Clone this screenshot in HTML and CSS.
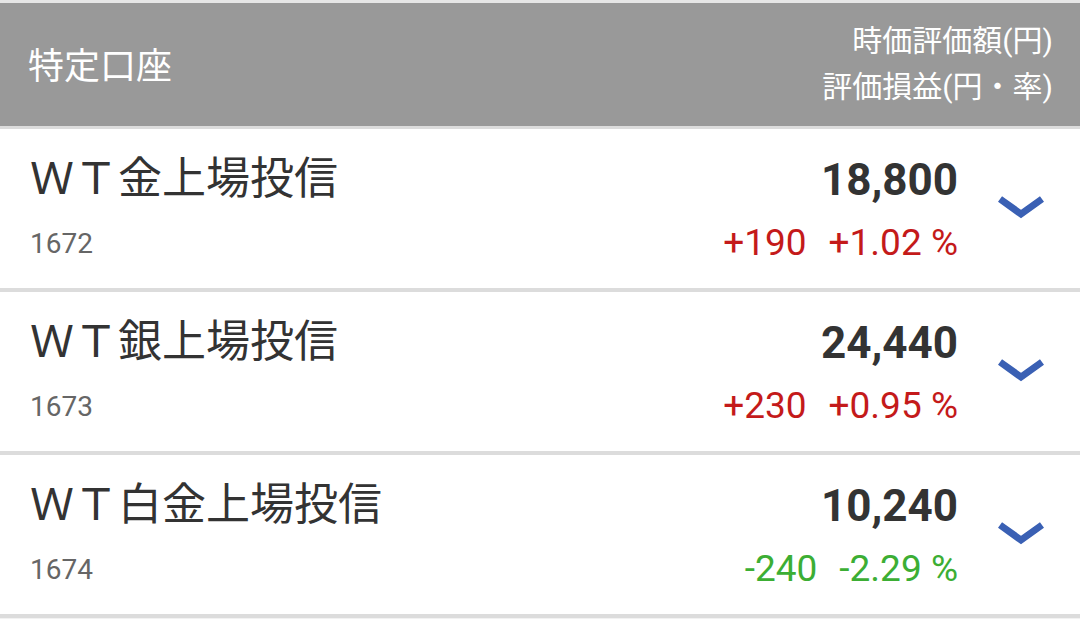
FILE: index.html
```html
<!DOCTYPE html>
<html lang="ja">
<head>
  <meta charset="UTF-8">
  <title>特定口座</title>
  <meta name="viewport" content="width=device-width, initial-scale=1.0" />
  <link rel="stylesheet" href="styles.css">
</head>
<body>

<div class="account">
  <div class="account-head">
    <div class="head-title">特定口座</div>
    <div class="head-cols">
      <div>時価評価額(円)</div>
      <div>評価損益(円・率)</div>
    </div>
  </div>

  <div class="fund">
    <div class="fund-left">
      <div class="fund-name">ＷＴ金上場投信</div>
      <div class="fund-code">1672</div>
    </div>
    <div class="fund-right">
      <div class="fund-value">18,800</div>
      <div class="fund-change up"><span>+190</span><span>+1.02 %</span></div>
    </div>
    <div class="fund-toggle">
      <svg width="46" height="24" viewBox="0 0 46 24"><path d="M2 4 L23 19 L44 4" fill="none" stroke="#3a60b4" stroke-width="7"/></svg>
    </div>
  </div>

  <div class="fund">
    <div class="fund-left">
      <div class="fund-name">ＷＴ銀上場投信</div>
      <div class="fund-code">1673</div>
    </div>
    <div class="fund-right">
      <div class="fund-value">24,440</div>
      <div class="fund-change up"><span>+230</span><span>+0.95 %</span></div>
    </div>
    <div class="fund-toggle">
      <svg width="46" height="24" viewBox="0 0 46 24"><path d="M2 4 L23 19 L44 4" fill="none" stroke="#3a60b4" stroke-width="7"/></svg>
    </div>
  </div>

  <div class="fund">
    <div class="fund-left">
      <div class="fund-name">ＷＴ白金上場投信</div>
      <div class="fund-code">1674</div>
    </div>
    <div class="fund-right">
      <div class="fund-value">10,240</div>
      <div class="fund-change down"><span>-240</span><span>-2.29 %</span></div>
    </div>
    <div class="fund-toggle">
      <svg width="46" height="24" viewBox="0 0 46 24"><path d="M2 4 L23 19 L44 4" fill="none" stroke="#3a60b4" stroke-width="7"/></svg>
    </div>
  </div>
</div>

</body>
</html>
```

FILE: styles.css
```css
* {
  box-sizing: border-box;
}

body {
  margin: 0;
  background: #f2f2f2;
  font-family: Roboto, "Noto Sans CJK JP", sans-serif;
  color: #333;
}

.account {
  border-top: 3px solid #e6e6e6;
}

.account-head {
  height: 126px;
  background: #999999;
  border-bottom: 3px solid #dcdcdc;
  color: #fff;
  display: flex;
  justify-content: space-between;
  align-items: center;
  padding: 0 27px 0 28px;
}

.head-title {
  font-family: "Noto Sans CJK JP", sans-serif;
  font-size: 36px;
  padding-bottom: 4px;
}

.head-cols {
  font-family: Roboto, "Noto Sans CJK JP", sans-serif;
  font-size: 30px;
  line-height: 46px;
  text-align: right;
  padding-bottom: 2px;
}

.fund {
  height: 163px;
  background: #fff;
  border-bottom: 4px solid #dcdcdc;
  display: flex;
  align-items: center;
  padding: 0 36px 0 30px;
}

.fund-left {
  flex: 1;
  padding-bottom: 6px;
}

.fund-name {
  font-family: "Noto Sans CJK JP", sans-serif;
  font-size: 44px;
  line-height: 56px;
  color: #333;
}

.fund-code {
  font-size: 28px;
  line-height: 40px;
  margin-top: 21px;
  color: #666;
}

.fund-right {
  text-align: right;
  padding-bottom: 3px;
}

.fund-value {
  font-size: 44px;
  font-weight: bold;
  line-height: 56px;
  color: #333;
}

.fund-change {
  font-size: 37px;
  line-height: 40px;
  margin-top: 15px;
  display: flex;
  justify-content: flex-end;
  gap: 22px;
}

.fund-change.up {
  color: #c41a1a;
}

.fund-change.down {
  color: #3cae34;
}

.fund-toggle {
  width: 86px;
  display: flex;
  justify-content: flex-end;
  margin-top: -4px;
}
```
